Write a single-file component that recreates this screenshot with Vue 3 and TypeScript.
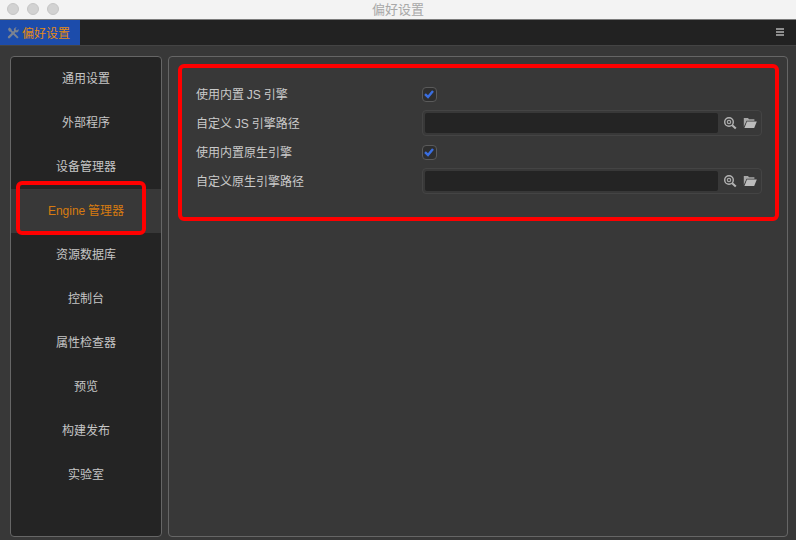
<template>
  <div class="window">
    <header class="titlebar">
      <div class="lights">
        <span class="light"></span>
        <span class="light"></span>
        <span class="light"></span>
      </div>
      <div class="title">偏好设置</div>
    </header>
    <div class="tabbar">
      <div class="tab">
        <svg class="tab-icon" viewBox="0 0 14 14" width="14" height="14">
          <path d="M2 3 L3.4 1.6 L5.4 3 L5.6 4.2 L12.6 11.2 L11.2 12.6 L4.2 5.6 L3 5.4 Z" fill="#7b8391" />
          <path d="M12.6 3 L10.8 4.6 L9.6 3.6 L9.6 2.6 L10.8 1.6 L9.2 1.6 L7.8 3 L8 4.8 L2 10.6 L1.8 11.4 L2.8 12.4 L3.6 12.2 L9.4 6.2 L11.2 6.4 L12.6 5 Z" fill="#7b8391" />
        </svg>
        <span>偏好设置</span>
      </div>
      <div class="menu-btn">
        <i></i><i></i><i></i>
      </div>
    </div>

    <main class="content">
      <nav class="sidebar">
        <div
          v-for="item in navItems"
          :key="item"
          class="nav-item"
          :class="{ active: item === activeItem }"
        >
          {{ item }}
        </div>
      </nav>

      <section class="panel">
        <div class="form">
          <template v-for="row in rows" :key="row.label">
            <div class="row" :class="row.type">
              <label class="row-label">{{ row.label }}</label>
              <div class="row-value">
                <span v-if="row.type === 'check'" class="checkbox">
                  <svg viewBox="0 0 14 14" width="14" height="14">
                    <path d="M3 7.2 L6 10 L11 4" fill="none" stroke="#3a6ee0" stroke-width="2.4" />
                  </svg>
                </span>
                <div v-else class="path-box">
                  <div class="path-input"></div>
                  <svg class="path-icon" viewBox="0 0 14 14" width="14" height="14">
                    <circle cx="6" cy="6" r="4.3" fill="none" stroke="#b4b4b4" stroke-width="1.4" />
                    <circle cx="6" cy="6" r="1.7" fill="none" stroke="#a8a8a8" stroke-width="1.2" />
                    <path d="M9.2 9.2 L12.8 12.6" stroke="#b4b4b4" stroke-width="2" />
                  </svg>
                  <svg class="path-icon folder" viewBox="0 0 14 14" width="14" height="14">
                    <path d="M0.8 11 V2 H5 L6 3.2 H11.4 V4.8 H3.6 L1.6 9 Z" fill="#a8a8a8" />
                    <path d="M1.4 12 L4 5.6 H13.8 L11.2 12 Z" fill="#bcbcbc" />
                  </svg>
                </div>
              </div>
            </div>
          </template>
        </div>
      </section>
    </main>

    <!-- annotation boxes drawn on top of the screenshot -->
    <div class="mark mark-nav"></div>
    <div class="mark mark-form"></div>
  </div>
</template>

<script setup lang="ts">
const navItems = [
  '通用设置',
  '外部程序',
  '设备管理器',
  'Engine 管理器',
  '资源数据库',
  '控制台',
  '属性检查器',
  '预览',
  '构建发布',
  '实验室',
]
const activeItem = 'Engine 管理器'

const rows: { label: string; type: 'check' | 'path' }[] = [
  { label: '使用内置 JS 引擎', type: 'check' },
  { label: '自定义 JS 引擎路径', type: 'path' },
  { label: '使用内置原生引擎', type: 'check' },
  { label: '自定义原生引擎路径', type: 'path' },
]
</script>

<style>
html,
body {
  margin: 0;
  background: #383838;
}
</style>

<style scoped>
.window {
  position: relative;
  display: flex;
  flex-direction: column;
  height: 540px;
  overflow: hidden;
  background: #383838;
  color: #c8c8c8;
  font-family: "Liberation Sans", "Noto Sans CJK SC", sans-serif;
  font-size: 12px;
  word-spacing: -0.5px;
}

.titlebar {
  position: relative;
  flex: none;
  height: 19px;
  background: #f3f3f3;
  border-bottom: 1px solid #7c7c7c;
}
.lights {
  display: flex;
  gap: 8px;
  padding: 3px 0 0 7px;
}
.light {
  width: 12px;
  height: 12px;
  border-radius: 50%;
  background: #d2d2d2;
  border: 0.5px solid #c6c6c6;
  box-sizing: border-box;
}
.title {
  position: absolute;
  inset: 0;
  text-align: center;
  line-height: 19px;
  font-size: 13px;
  color: #a8a8a8;
}

.tabbar {
  flex: none;
  display: flex;
  justify-content: space-between;
  height: 25px;
  background: #222;
  border-bottom: 1px solid #444;
}
.tab {
  display: flex;
  align-items: center;
  gap: 2px;
  width: 80px;
  height: 25px;
  padding-left: 6px;
  box-sizing: border-box;
  background: #1c4cab;
  color: #e58a12;
  font-size: 12px;
}
.menu-btn {
  display: flex;
  flex-direction: column;
  gap: 1px;
  margin: 8px 12px 0 0;
}
.menu-btn i {
  display: block;
  width: 8px;
  height: 2px;
  background: #8e8e8e;
}

.content {
  flex: 1;
  display: flex;
  gap: 6px;
  padding: 10px 8px 3px 10px;
  min-height: 0;
}
.sidebar {
  flex: none;
  width: 152px;
  box-sizing: border-box;
  background: #242424;
  border: 1px solid #666;
  border-radius: 4px;
}
.nav-item {
  height: 44px;
  line-height: 44px;
  text-align: center;
  color: #c6c6c6;
}
.nav-item.active {
  background: #383838;
  color: #d67b10;
}

.panel {
  flex: 1;
  box-sizing: border-box;
  border: 1px solid #666;
  border-radius: 4px;
  padding: 23px 25px 0 27px;
}
.row {
  display: flex;
  align-items: center;
}
.row.check {
  height: 28px;
}
.row.path {
  height: 30px;
}
.row-label {
  flex: none;
  width: 226px;
  padding-bottom: 2px;
  color: #cacaca;
}
.row-value {
  flex: 1;
  display: flex;
}
.checkbox {
  display: block;
  width: 15px;
  height: 15px;
  box-sizing: border-box;
  background: #2e2e2e;
  border: 1.5px solid #5a5a5a;
  border-radius: 4px;
}
.checkbox svg {
  display: block;
  margin: -1px;
}
.path-box {
  flex: 1;
  display: flex;
  align-items: center;
  height: 26px;
  box-sizing: border-box;
  padding: 0 4px 0 2px;
  border: 1px solid #444;
  border-radius: 4px;
}
.path-input {
  flex: 1;
  height: 20px;
  background: #242424;
  border-radius: 2px;
}
.path-icon {
  flex: none;
  margin-left: 5px;
}
.path-icon.folder {
  margin-left: 6px;
}

.mark {
  position: absolute;
  box-sizing: border-box;
  border: 4px solid #f00;
  border-radius: 6px;
}
.mark-nav {
  left: 16px;
  top: 181px;
  width: 130px;
  height: 54px;
}
.mark-form {
  left: 178px;
  top: 64px;
  width: 601px;
  height: 157px;
}
</style>
